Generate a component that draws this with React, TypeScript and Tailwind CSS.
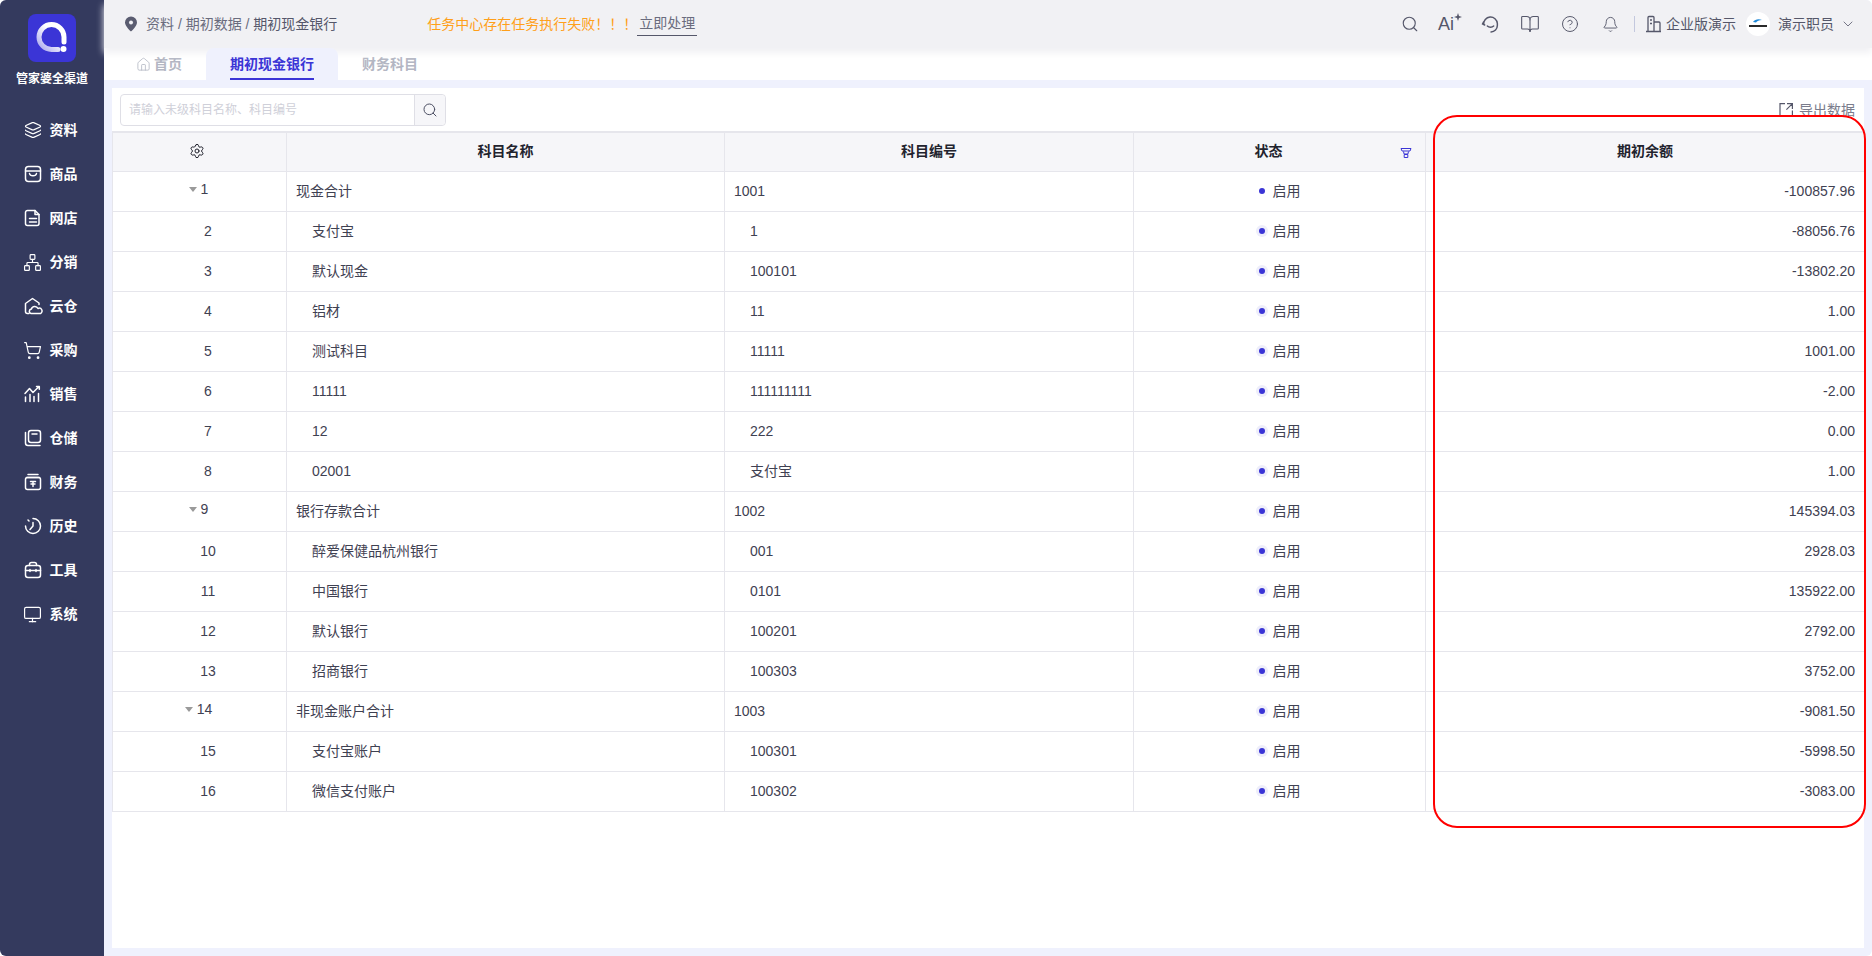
import { ReactNode } from "react";
import { ChevronDown, CircleHelp, Bell, BookOpen, House, Layers, Monitor, Network, Search, Settings, ShoppingCart } from "lucide-react";

type Row = { no: number; name: string; code: string; amount: string; tree?: boolean };

const rows: Row[] = [
  { no: 1, name: "现金合计", code: "1001", amount: "-100857.96", tree: true },
  { no: 2, name: "支付宝", code: "1", amount: "-88056.76" },
  { no: 3, name: "默认现金", code: "100101", amount: "-13802.20" },
  { no: 4, name: "铝材", code: "11", amount: "1.00" },
  { no: 5, name: "测试科目", code: "11111", amount: "1001.00" },
  { no: 6, name: "11111", code: "111111111", amount: "-2.00" },
  { no: 7, name: "12", code: "222", amount: "0.00" },
  { no: 8, name: "02001", code: "支付宝", amount: "1.00" },
  { no: 9, name: "银行存款合计", code: "1002", amount: "145394.03", tree: true },
  { no: 10, name: "醉爱保健品杭州银行", code: "001", amount: "2928.03" },
  { no: 11, name: "中国银行", code: "0101", amount: "135922.00" },
  { no: 12, name: "默认银行", code: "100201", amount: "2792.00" },
  { no: 13, name: "招商银行", code: "100303", amount: "3752.00" },
  { no: 14, name: "非现金账户合计", code: "1003", amount: "-9081.50", tree: true },
  { no: 15, name: "支付宝账户", code: "100301", amount: "-5998.50" },
  { no: 16, name: "微信支付账户", code: "100302", amount: "-3083.00" },
];

// 侧边栏图标
const Svg = ({ children }: { children: ReactNode }) => (
  <svg width="20" height="20" viewBox="0 0 20 20" fill="none" stroke="currentColor" strokeWidth="1.5" strokeLinecap="round" strokeLinejoin="round">
    {children}
  </svg>
);

const navItems: { label: string; icon: ReactNode }[] = [
  { label: "资料", icon: <Layers size={18} strokeWidth={1.6} /> },
  {
    label: "商品",
    icon: (
      <Svg>
        <rect x="2.500" y="2.500" width="15" height="15" rx="3" />
        <path d="M2.500 7h15M6.500 9.500c.5 3 6.500 3 7 0" />
      </Svg>
    ),
  },
  {
    label: "网店",
    icon: (
      <Svg>
        <path d="M4.500 2.500h7.500l4 4v9a2 2 0 0 1-2 2h-9.500a2 2 0 0 1-2-2v-11a2 2 0 0 1 2-2z" />
        <path d="M12 2.500v4h4M6.500 10.500h7M6.500 14h7" />
      </Svg>
    ),
  },
  { label: "分销", icon: <Network size={19} strokeWidth={1.5} /> },
  {
    label: "云仓",
    icon: (
      <Svg>
        <path d="M6 17.500h-1.500a2 2 0 0 1-2-2v-8l7-5 6.500 4.500v1.500" />
        <path d="M8 17.500a2.300 2.300 0 0 1 .4-4.500 3.500 3.500 0 0 1 6.600-.5 2.500 2.500 0 0 1 2.500 5z" />
      </Svg>
    ),
  },
  { label: "采购", icon: <ShoppingCart size={19} strokeWidth={1.5} /> },
  {
    label: "销售",
    icon: (
      <Svg>
        <path d="M2 9.500l4.500-5 3.500 4 6-6M13.500 2.500h2.800v2.800M2.500 13v4.500M7 10.500v7M11 12.500v5M15.500 9.500v8" />
      </Svg>
    ),
  },
  {
    label: "仓储",
    icon: (
      <Svg>
        <path d="M2.500 4.500v10.500a2.500 2.500 0 0 0 2.500 2.500h12" />
        <rect x="5.500" y="2.500" width="12" height="12" rx="2.500" />
        <path d="M9 6h5" />
      </Svg>
    ),
  },
  {
    label: "财务",
    icon: (
      <Svg>
        <path d="M5 2.500h10M3.500 5.500h13" />
        <rect x="2.500" y="5.500" width="15" height="12" rx="2" />
        <path d="M7.500 9.500h5M10 9.500v5M8 12h4" />
      </Svg>
    ),
  },
  {
    label: "历史",
    icon: (
      <Svg>
        <path d="M10 2.500a7.500 7.500 0 1 1-7.500 7.500" />
        <path d="M5 4l1 1M10 6.500v3.500l-3 3.500" />
      </Svg>
    ),
  },
  {
    label: "工具",
    icon: (
      <Svg>
        <path d="M6.500 5.500v-1a2 2 0 0 1 2-2h3a2 2 0 0 1 2 2v1" />
        <rect x="2.500" y="5.500" width="15" height="12" rx="2.500" />
        <path d="M2.500 10.500h15M7 9.500v2M13 9.500v2" />
      </Svg>
    ),
  },
  { label: "系统", icon: <Monitor size={19} strokeWidth={1.5} /> },
];

const FilterIcon = () => (
  <svg width="12" height="12" viewBox="0 0 12 12" fill="none" stroke="#3b35d6" strokeWidth="1">
    <path d="M1 1.500h10l-1 2.500h-8zM3.500 4.500l.6 2.500h3.800l.6-2.500M4.200 7.500h3.600v3h-3.600z" />
  </svg>
);

export default function App() {
  return (
    <div className="relative flex h-screen overflow-hidden rounded-md bg-[#eff1fd] font-['Liberation_Sans','Noto_Sans_CJK_SC',sans-serif] text-sm text-[#3f4152]">
      {/* 侧边栏 */}
      <aside className="flex w-[104px] shrink-0 flex-col items-center bg-[#343a5e] text-white">
        <div className="mt-[14px] flex h-12 w-12 items-center justify-center rounded-lg bg-[#3b35d6]">
          <svg width="36" height="36" viewBox="0 0 36 36" fill="none">
            <defs>
              <linearGradient id="ring" x1="0" y1="1" x2="1" y2="0">
                <stop offset="0" stopColor="#a9a6ee" />
                <stop offset="0.6" stopColor="#ffffff" />
              </linearGradient>
            </defs>
            <path d="M24 29.500h-6.500a12.500 12.500 0 1 1 12.500-12.500v5" stroke="url(#ring)" strokeWidth="5" strokeLinecap="round" />
            <circle cx="29.500" cy="29" r="3" fill="#fff" />
          </svg>
        </div>
        <div className="mt-[9px] text-xs leading-[16px] font-bold">管家婆全渠道</div>
        <nav className="mt-[21px] flex flex-col pr-[4px]">
          {navItems.map((item) => (
            <div key={item.label} className="flex h-11 items-center gap-[7px]">
              <span className="flex w-5 justify-center">{item.icon}</span>
              <span className="font-bold">{item.label}</span>
            </div>
          ))}
        </nav>
      </aside>

      <div className="flex min-w-0 flex-1 flex-col">
        {/* 顶栏 */}
        <header className="relative z-10 flex h-12 shrink-0 items-center bg-[#f1f1f4] pl-[20px] pr-[16px] shadow-[0_5px_7px_#f1f1f4]">
          <svg width="14" height="16" viewBox="0 0 14 16" className="mr-[8px]">
            <path d="M7 0.500a6 6 0 0 0-6 6c0 4 6 9 6 9s6-5 6-9a6 6 0 0 0-6-6z" fill="#5a5c70" />
            <circle cx="7" cy="6.500" r="2" fill="#f1f1f4" />
          </svg>
          <span className="text-[#6a6c7e]">资料 / 期初数据 / <span className="text-[#55576a]">期初现金银行</span></span>
          <span className="ml-[90px] text-[#ff9f1a]">任务中心存在任务执行失败！！！</span>
          <span className="border-b border-[#55576a] px-[2px] pb-[2px] text-[#6a6c7e]">立即处理</span>
          <div className="ml-auto flex items-center text-[#55576a]">
            <span className="flex w-10 justify-center"><Search size={18} strokeWidth={1.5} /></span>
            <span className="flex w-10 items-start justify-center text-[18px] leading-none">
              Ai
              <svg width="8" height="8" viewBox="0 0 8 8" fill="currentColor" className="-mt-[2px]">
                <path d="M4 0l1 3 3 1-3 1-1 3-1-3-3-1 3-1z" />
              </svg>
            </span>
            <span className="flex w-10 justify-center">
              <svg width="19" height="19" viewBox="0 0 18 18" fill="none" stroke="currentColor" strokeWidth="1.4" strokeLinecap="round">
                <path d="M2.500 9a6.500 6.500 0 0 1 13-1M2.500 6.500l-1 2 2 1M15.500 8v2a6 6 0 0 1-6 6M6 10.500c1.500 1.500 4.500 1.500 6 0" />
              </svg>
            </span>
            <span className="flex w-10 justify-center"><BookOpen size={20} strokeWidth={1.3} /></span>
            <span className="flex w-10 justify-center"><CircleHelp size={18} strokeWidth={1.3} /></span>
            <span className="flex w-10 justify-center"><Bell size={17} strokeWidth={1.3} /></span>
            <span className="ml-[4px] mr-[10px] h-4 w-px bg-[#c3c8de]" />
            <svg width="17" height="18" viewBox="0 0 17 18" fill="none" stroke="currentColor" strokeWidth="1.3" className="mr-[4px]">
              <path d="M1 16.500h15M3 16.500v-14a1 1 0 0 1 1-1h4a1 1 0 0 1 1 1v14M9 7h5a1 1 0 0 1 1 1v8.500M5 5h2M5 8.500h2" />
            </svg>
            <span className="text-[#55576a]">企业版演示</span>
            <span className="relative ml-[10px] mr-[8px] flex h-6 w-6 items-center justify-center rounded-full bg-white">
              <svg width="20" height="12" viewBox="0 0 20 12">
                <path d="M5 4c2-3 6-3.500 9-2-3 0-5 1-6 2.500z" fill="#1e88d8" />
                <rect x="1" y="7" width="18" height="2" fill="#2a2a2a" />
              </svg>
            </span>
            <span className="text-[#55576a]">演示职员</span>
            <ChevronDown size={16} strokeWidth={1.2} className="ml-[6px]" />
          </div>
        </header>

        {/* 标签页 */}
        <div className="flex h-8 shrink-0 items-stretch bg-white pl-[32px] font-bold text-[#b3b6c3]">
          <div className="flex w-[70px] items-center gap-[3px]">
            <House size={15} strokeWidth={1.3} />
            首页
          </div>
          <div className="relative z-20 flex w-[132px] items-center justify-center rounded-t-lg bg-[#eff1fd] text-[#3b35d6]">
            期初现金银行
            <span className="absolute bottom-0 left-[24px] h-[2px] w-[84px] bg-[#3b35d6]" />
          </div>
          <div className="ml-6 flex items-center">财务科目</div>
        </div>

        {/* 内容区 */}
        <main className="m-2 min-h-0 flex-1 bg-white">
          <div className="flex h-[43px] items-start justify-between pl-2 pr-[9px] pt-[6px]">
            <div className="flex h-8 w-[326px] rounded border border-[#dfdfe6]">
              <div className="flex flex-1 items-center pl-[8px] text-xs text-[#cfd0d9]">请输入未级科目名称、科目编号</div>
              <div className="flex w-[31px] items-center justify-center rounded-r border-l border-[#dfdfe6] bg-[#f6f6f9] text-[#4c4f63]">
                <Search size={16} strokeWidth={1.5} />
              </div>
            </div>
            <div className="mt-[6px] flex items-center gap-[6px] text-[#7a7c8c]">
              <svg width="14" height="14" viewBox="0 0 14 14" fill="none" stroke="#55576a" strokeWidth="1.2">
                <path d="M6 .6h-5v12.800h12.400v-6M8 .6h5.400v5.400M13.400 .6l-6 6" />
              </svg>
              导出数据
            </div>
          </div>

          <table className="w-full table-fixed border-collapse border-t-2 border-[#e6e6ec]">
            <colgroup>
              <col className="w-[174px]" />
              <col className="w-[438px]" />
              <col className="w-[409px]" />
              <col className="w-[292px]" />
              <col />
            </colgroup>
            <thead>
              <tr className="h-[39px] bg-[#f6f6f9] font-bold text-[#22232e]">
                <th className="border-x border-b border-[#e6e6ec] pr-[6px]">
                  <Settings size={16} strokeWidth={1.5} className="mx-auto mb-[2px]" />
                </th>
                <th className="border-x border-b border-[#e6e6ec] pb-[2px]">科目名称</th>
                <th className="border-x border-b border-[#e6e6ec] pb-[2px]">科目编号</th>
                <th className="relative border-x border-b border-[#e6e6ec] pr-[22px] pb-[2px]">
                  状态
                  <span className="absolute right-[13px] top-[14px]"><FilterIcon /></span>
                </th>
                <th className="border-y border-[#e6e6ec] pb-[2px]">期初余额</th>
              </tr>
            </thead>
            <tbody>
              {rows.map((row) => (
                <tr key={row.no} className="h-10">
                  <td className="border border-[#e6e6ec] p-0 text-center">
                    {row.tree ? (
                      <div className="flex items-center justify-center gap-[4px] pr-[2px] pb-[4px]">
                        <span className="h-0 w-0 border-x-4 border-t-[5px] border-x-transparent border-t-[#9a9a9a]" />
                        {row.no}
                      </div>
                    ) : (
                      <div className="pl-[17px]">{row.no}</div>
                    )}
                  </td>
                  <td className={`border border-[#e6e6ec] ${row.tree ? "pl-[9px]" : "pl-[25px]"}`}>{row.name}</td>
                  <td className={`border border-[#e6e6ec] ${row.tree ? "pl-[9px]" : "pl-[25px]"}`}>{row.code}</td>
                  <td className="border border-[#e6e6ec]">
                    <div className="flex items-center justify-center gap-[5px] pr-[3px]">
                      <span className={`flex h-3 w-3 items-center justify-center rounded-full ${row.no === 1 ? "" : "bg-[#eeeefa]"}`}>
                        <span className="h-[6px] w-[6px] rounded-full bg-[#3b35d6]" />
                      </span>
                      启用
                    </div>
                  </td>
                  <td className="border-y border-[#e6e6ec] pr-[9px] text-right">{row.amount}</td>
                </tr>
              ))}
            </tbody>
          </table>
        </main>
      </div>

      {/* 红框标注 */}
      <div className="absolute left-[1433px] top-[115px] h-[713px] w-[433px] rounded-[24px] border-2 border-[#ff0000]" />
    </div>
  );
}
